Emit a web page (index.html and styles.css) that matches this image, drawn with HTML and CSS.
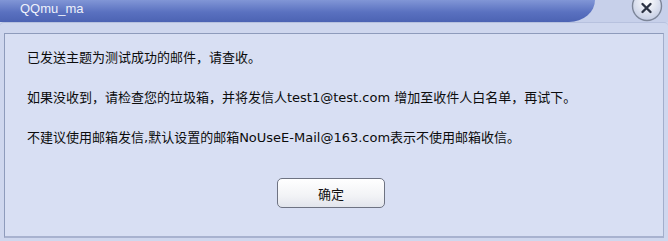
FILE: index.html
```html
<!DOCTYPE html>
<html lang="zh-CN">
<head>
    <meta charset="UTF-8">
    <title>QQmu_ma</title>
    <link rel="stylesheet" href="styles.css">
</head>
<body>
<div class="dialog">
    <div class="titlebar">
        <div class="tab">QQmu_ma</div>
        <div class="close">
            <svg width="34" height="24" viewBox="0 0 34 24">
                <defs>
                    <radialGradient id="cg" cx="50%" cy="35%" r="60%">
                        <stop offset="0" stop-color="#ffffff"/>
                        <stop offset="1" stop-color="#c9d1e6"/>
                    </radialGradient>
                </defs>
                <circle cx="16" cy="6" r="14.5" fill="url(#cg)" stroke="#7d8699" stroke-width="1.4"/>
                <path d="M11.5 4 L19.5 12 M19.5 4 L11.5 12" stroke="#2c3344" stroke-width="2.4" stroke-linecap="round"/>
            </svg>
        </div>
    </div>
    <div class="frame">
        <div class="panel">
            <p>已发送主题为测试成功的邮件，请查收。</p>
            <p>如果没收到，请检查您的垃圾箱，并将发信人test1@test.com 增加至收件人白名单，再试下。</p>
            <p>不建议使用邮箱发信,默认设置的邮箱NoUseE-Mail@163.com表示不使用邮箱收信。</p>
            <div class="actions">
                <button class="btn">确定</button>
            </div>
        </div>
    </div>
</div>
</body>
</html>
```

FILE: styles.css
```css
*{margin: 0;padding: 0}
body{
    background: #cfd7ee;
    font-family: "Liberation Sans", "Noto Sans CJK SC", sans-serif;
}
.dialog{
    width: 668px;
    height: 241px;
    background: #cfd7ee;
    overflow: hidden;
}
    .titlebar{
        display: flex;
        height: 22px;
        background: #c7d0ea;
    }
        .tab{
            width: 575px;
            height: 22px;
            padding-left: 20px;
            background: linear-gradient(#8196d6, #5a71c0 55%, #4c63b3);
            border-bottom-right-radius: 26px 22px;
            color: #eef1fb;
            font-size: 13px;
            line-height: 18px;
        }
        .close{
            margin-left: 36px;
            height: 22px;
        }
    .frame{
        height: 219px;
        padding: 10px 4px 0 4px;
        box-sizing: border-box;
        border-top: 1px solid #b7c1de;
        border-radius: 4px 4px 0 0;
        background: #cfd7ee;
    }
        .panel{
            height: 205px;
            box-sizing: border-box;
            padding: 4px 0 0 22px;
            background: #d8dff3;
            border: 1px solid #8e9bbb;
            border-right-color: #a3aecb;
            border-bottom: 2px solid #a8b2cf;
        }
            .panel p{
                font-family: "DejaVu Sans", "Noto Sans CJK SC", sans-serif;
                font-size: 13px;
                line-height: 40px;
                color: #0c0c0c;
                white-space: nowrap;
            }
            .actions{
                display: flex;
                justify-content: center;
                margin: 20px 0 0 -28px;
            }
            .btn{
                width: 108px;
                height: 30px;
                font-family: "Noto Sans CJK SC", sans-serif;
                font-size: 13px;
                color: #111;
                background: linear-gradient(#ffffff, #f2f3f6 60%, #e2e5ec);
                border: 1px solid #6e7382;
                border-radius: 5px;
            }
```
